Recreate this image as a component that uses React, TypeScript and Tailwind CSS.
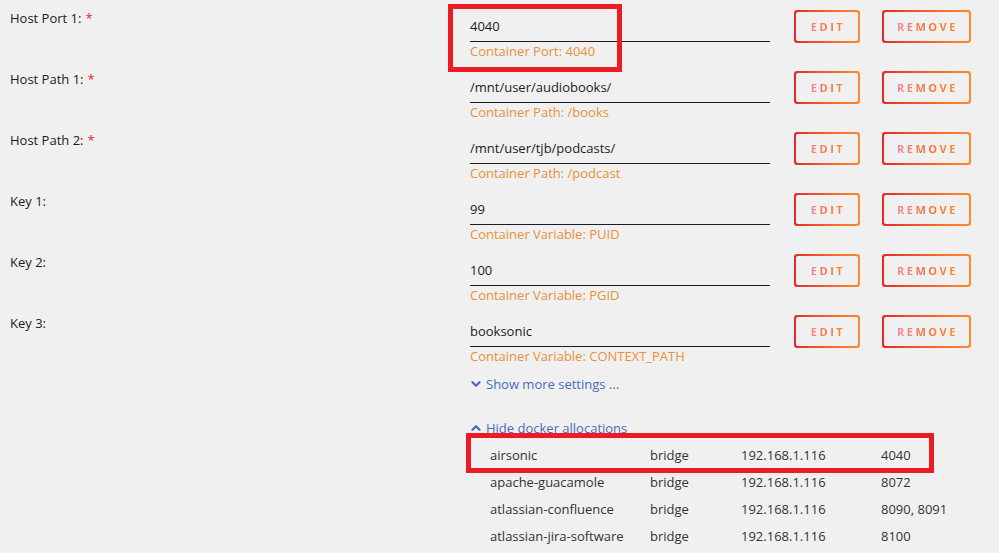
import React from 'react';
import { ChevronDown, ChevronUp } from 'lucide-react';

interface Mapping {
    label: string;
    required?: boolean;
    value: string;
    target: string;
}

const mappings: Mapping[] = [
    { label: 'Host Port 1:', required: true, value: '4040', target: 'Container Port: 4040' },
    { label: 'Host Path 1:', required: true, value: '/mnt/user/audiobooks/', target: 'Container Path: /books' },
    { label: 'Host Path 2:', required: true, value: '/mnt/user/tjb/podcasts/', target: 'Container Path: /podcast' },
    { label: 'Key 1:', value: '99', target: 'Container Variable: PUID' },
    { label: 'Key 2:', value: '100', target: 'Container Variable: PGID' },
    { label: 'Key 3:', value: 'booksonic', target: 'Container Variable: CONTEXT_PATH' },
];

const allocations = [
    ['airsonic', 'bridge', '192.168.1.116', '4040'],
    ['apache-guacamole', 'bridge', '192.168.1.116', '8072'],
    ['atlassian-confluence', 'bridge', '192.168.1.116', '8090, 8091'],
    ['atlassian-jira-software', 'bridge', '192.168.1.116', '8100'],
];

function GradientButton({ label, width }: { label: string; width: string }) {
    return (
        <div className={`h-[33px] self-start rounded-[3px] bg-gradient-to-r from-[#e22828] to-[#ff8b2f] p-[2px] ${width}`}>
            <div className="flex h-full items-center justify-center rounded-[2px] bg-[#f0f0f0] pt-[2px]">
                <span className="bg-gradient-to-r from-[#f28ba0] via-[#f5713a] to-[#ff8b2f] bg-clip-text pl-[2px] text-[11px] font-bold tracking-[2.5px] text-transparent">
                    {label}
                </span>
            </div>
        </div>
    );
}

export default function App() {
    return (
        <div
            className="relative h-[553px] w-[999px] overflow-hidden bg-[#f0f0f0] text-[13px] text-[#1c1c1c]"
            style={{ fontFamily: '"Open Sans", "Noto Sans", sans-serif' }}
        >
            {mappings.map((m) => (
                <div key={m.label} className="flex h-[61px]">
                    <div className="w-[470px] pl-[10px] pt-[9px] leading-[18px]">
                        {m.label}
                        {m.required && <span className="ml-[4px] text-[#e22828]">*</span>}
                    </div>
                    <div className="w-[300px]">
                        <div className="h-[42px] border-b border-[#1c1c1c] pt-[16px] leading-[20px]">{m.value}</div>
                        <div className="leading-[19px] text-[#e8913a]">{m.target}</div>
                    </div>
                    <div className="flex items-start gap-[22px] pl-[24px] pt-[10px]">
                        <GradientButton label="EDIT" width="w-[66px]" />
                        <GradientButton label="REMOVE" width="w-[89px]" />
                    </div>
                </div>
            ))}

            <div className="pl-[469px] text-[#486dba]">
                <div className="mt-[10px] flex h-[16px] items-center gap-[3px] leading-[16px]">
                    <ChevronDown size={14} strokeWidth={4} />
                    <span>Show more settings ...</span>
                </div>
                <div className="mt-[28px] flex h-[16px] items-center gap-[3px] leading-[16px]">
                    <ChevronUp size={14} strokeWidth={4} />
                    <span>Hide docker allocations</span>
                </div>
            </div>

            <div className="mt-[6px] pl-[490px] text-[#333]">
                {allocations.map((row) => (
                    <div key={row[0]} className="flex h-[27px] items-center">
                        <div className="w-[160px]">{row[0]}</div>
                        <div className="w-[91px]">{row[1]}</div>
                        <div className="w-[140px]">{row[2]}</div>
                        <div>{row[3]}</div>
                    </div>
                ))}
            </div>

            {/* annotation boxes drawn over the screenshot */}
            <div className="absolute left-[448px] top-[4px] h-[68px] w-[174px] border-[5px] border-[#ed1c24]" />
            <div className="absolute left-[466px] top-[433px] h-[40px] w-[468px] border-[5px] border-[#ed1c24]" />
        </div>
    );
}
